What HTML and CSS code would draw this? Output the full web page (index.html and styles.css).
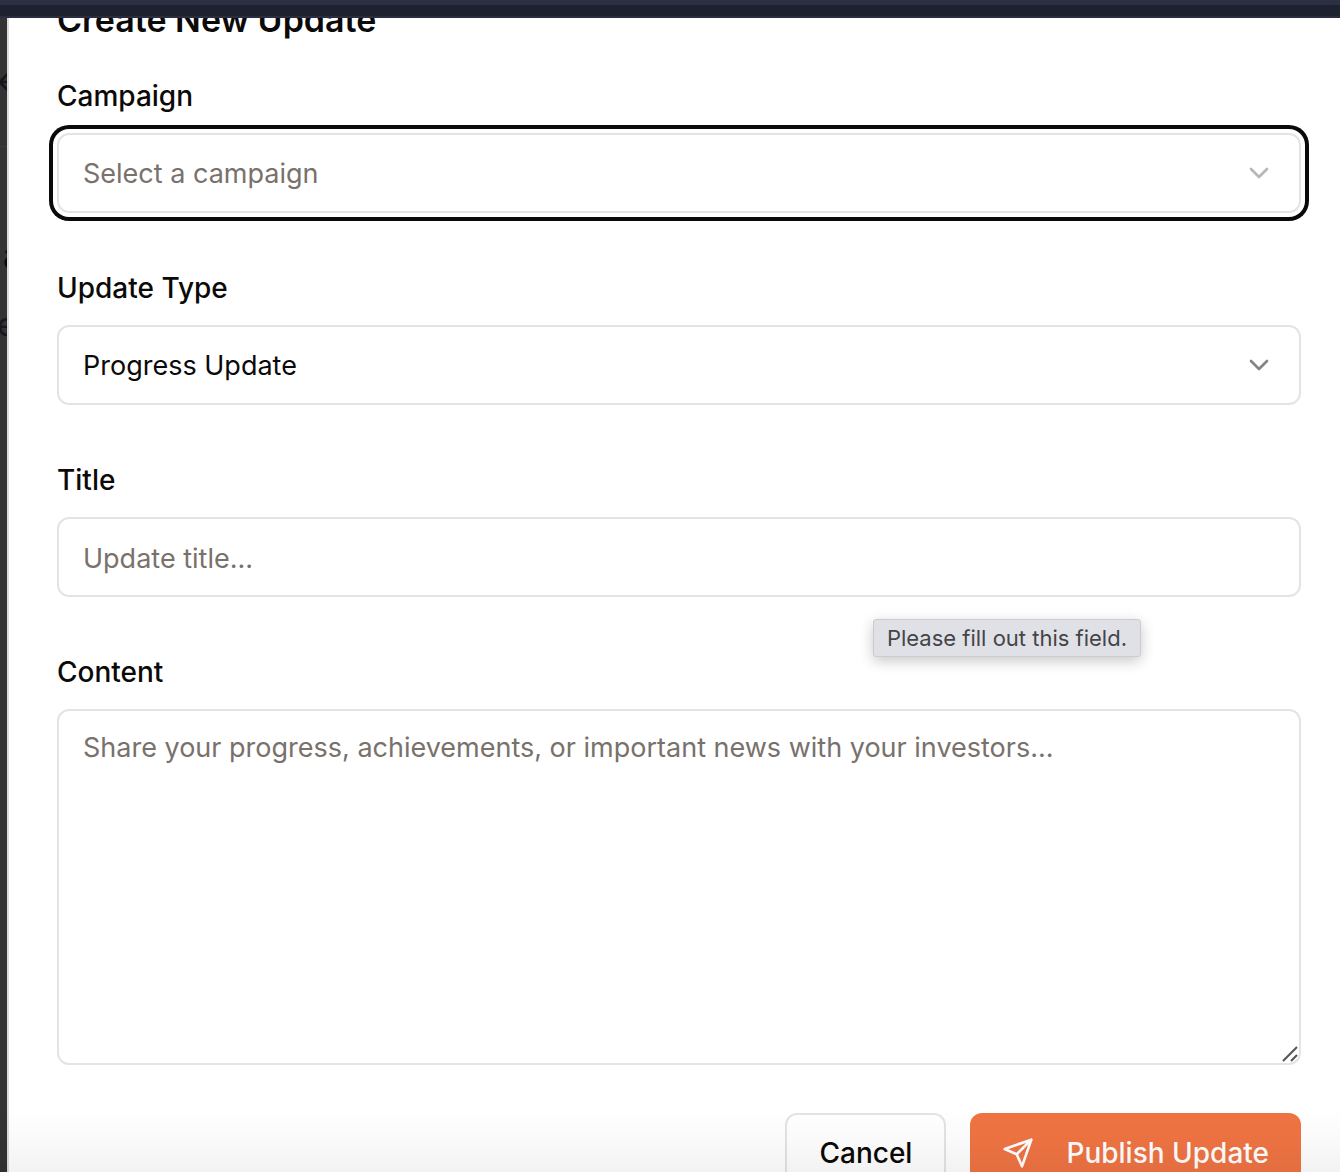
FILE: index.html
```html
<!DOCTYPE html>
<html lang="en">
<head>
  <meta charset="utf-8">
  <meta name="viewport" content="width=device-width, initial-scale=1">
  <title>Create New Update</title>
  <link rel="stylesheet" href="styles.css">
</head>
<body>
  <div class="topbar"></div>
  <div class="layout">
    <aside class="backdrop" aria-hidden="true">
      <div class="backdrop-nav">
        <svg class="backdrop-arrow" viewBox="0 0 24 24"><path d="m12 19-7-7 7-7M19 12H5"/></svg>
      </div>
      <div class="backdrop-title">a</div>
      <div class="backdrop-text">e</div>
    </aside>
    <main class="dialog" role="dialog" aria-labelledby="dialog-title">
      <h2 class="dialog-title" id="dialog-title">Create New Update</h2>
      <form class="form">
        <div class="field">
          <label class="label" for="campaign">Campaign</label>
          <div class="control-wrap">
            <select class="control control-focused control-empty" id="campaign">
              <option>Select a campaign</option>
            </select>
            <svg class="chevron chevron-muted" viewBox="0 0 24 24" aria-hidden="true"><path d="m6 9 6 6 6-6"/></svg>
          </div>
        </div>
        <div class="field">
          <label class="label" for="type">Update Type</label>
          <div class="control-wrap">
            <select class="control" id="type">
              <option>Progress Update</option>
            </select>
            <svg class="chevron" viewBox="0 0 24 24" aria-hidden="true"><path d="m6 9 6 6 6-6"/></svg>
          </div>
        </div>
        <div class="field">
          <label class="label" for="title">Title</label>
          <div class="control-wrap">
            <input class="control" id="title" type="text" placeholder="Update title...">
            <div class="tooltip" role="tooltip">Please fill out this field.</div>
          </div>
        </div>
        <div class="field">
          <label class="label" for="content">Content</label>
          <div class="control-wrap">
            <textarea class="control control-area" id="content" placeholder="Share your progress, achievements, or important news with your investors..."></textarea>
            <svg class="grip" viewBox="0 0 16 16" aria-hidden="true"><path d="M1 15 15 1M9 15l6-6"/></svg>
          </div>
        </div>
        <div class="actions">
          <button class="button button-outline" type="button">Cancel</button>
          <button class="button button-primary" type="submit">
            <svg class="send" viewBox="0 0 24 24" aria-hidden="true"><path d="m22 2-7 20-4-9-9-4ZM22 2 11 13"/></svg>
            Publish Update
          </button>
        </div>
      </form>
    </main>
  </div>
  <div class="shade"></div>
</body>
</html>
```

FILE: styles.css
```css
* {
  box-sizing: border-box;
}

body {
  margin: 0;
  height: 100vh;
  overflow: hidden;
  background: #fff;
  color: #0c0a09;
  font-family: Inter, "Liberation Sans", sans-serif;
  font-size: 27px;
  line-height: 36px;
}

.topbar {
  position: fixed;
  inset: 0 0 auto;
  z-index: 2;
  height: 18px;
  background: #1c2230;
  border-top: 5px solid #2d3043;
  border-bottom: 2px solid #2a2c40;
}

.layout {
  display: flex;
  min-height: 100vh;
}

.backdrop {
  flex: 0 0 7px;
  overflow: hidden;
  background: #333;
  color: #0c0a09;
}

.backdrop-nav {
  display: flex;
  align-items: flex-end;
  justify-content: flex-end;
  height: 147px;
  padding-bottom: 48px;
  border-bottom: 1px solid #3d3a3a;
}

.backdrop-arrow {
  flex: none;
  width: 32px;
  height: 32px;
  margin-right: -18px;
  fill: none;
  stroke: #14161c;
  stroke-width: 2;
}

.backdrop-title {
  margin-top: 84px;
  padding-left: 3px;
  font-size: 40px;
  font-weight: 700;
  line-height: 48px;
}

.backdrop-text {
  margin-top: 24px;
  margin-left: -3px;
  color: #17181d;
  font-size: 32px;
  line-height: 44px;
}

.dialog {
  flex: 1;
  min-width: 0;
  padding: 0 39px 48px 48px;
  border-left: 2px solid #dcdcde;
  background: #fff;
}

.dialog-title {
  margin: 0 0 37px;
  font-size: 34px;
  font-weight: 600;
  line-height: 40px;
}

.form {
  display: flex;
  flex-direction: column;
  gap: 56px;
}

.field {
  display: flex;
  flex-direction: column;
  gap: 18px;
}

.label {
  font-size: 28px;
  font-weight: 500;
  line-height: 38px;
}

.control-wrap {
  position: relative;
  display: flex;
}

.control {
  flex: 1;
  min-width: 0;
  height: 80px;
  margin: 0;
  padding: 2px 24px 0;
  appearance: none;
  border: 2px solid #e4e4e4;
  border-radius: 12px;
  outline: none;
  background: #fff;
  color: #0c0a09;
  font: inherit;
}

.control-focused {
  box-shadow: 0 0 0 4px #fff, 0 0 0 8px #0c0a09;
}

.control-empty,
.control::placeholder {
  color: #78716c;
  opacity: 1;
}

.control-area {
  height: 356px;
  padding: 19px 24px;
  resize: none;
}

.chevron {
  position: absolute;
  top: 24px;
  right: 26px;
  width: 32px;
  height: 32px;
  fill: none;
  stroke: #858585;
  stroke-width: 2;
  stroke-linecap: round;
  stroke-linejoin: round;
  pointer-events: none;
}

.chevron-muted {
  stroke: #b9b7b6;
}

.grip {
  position: absolute;
  right: 3px;
  bottom: 3px;
  width: 16px;
  height: 16px;
  fill: none;
  stroke: #555;
  stroke-width: 2;
  pointer-events: none;
}

.tooltip {
  position: absolute;
  top: 102px;
  right: 160px;
  z-index: 1;
  padding: 0 13px;
  border: 1px solid #cbcbd0;
  border-radius: 3px;
  background: #e0e1e6;
  box-shadow: 0 4px 14px rgb(0 0 0 / 22%);
  color: #444548;
  font-size: 22px;
  white-space: nowrap;
}

.actions {
  display: flex;
  justify-content: flex-end;
  gap: 24px;
  margin-top: -8px;
}

.button {
  display: flex;
  align-items: center;
  gap: 32px;
  height: 80px;
  padding: 0 32px;
  border: 0;
  border-radius: 12px;
  font: inherit;
  font-size: 28px;
  font-weight: 500;
}

.button-outline {
  border: 2px solid #e4e4e4;
  background: #fff;
  color: #0c0a09;
}

.button-primary {
  background: #f07443;
  color: #fff;
}

.send {
  width: 32px;
  height: 32px;
  fill: none;
  stroke: currentColor;
  stroke-width: 2;
  stroke-linecap: round;
  stroke-linejoin: round;
}

.shade {
  position: fixed;
  inset: auto 0 0;
  z-index: 3;
  height: 64px;
  background: linear-gradient(rgb(0 0 0 / 0%), rgb(0 0 0 / 2%) 50%, rgb(0 0 0 / 5%));
  pointer-events: none;
}
```
